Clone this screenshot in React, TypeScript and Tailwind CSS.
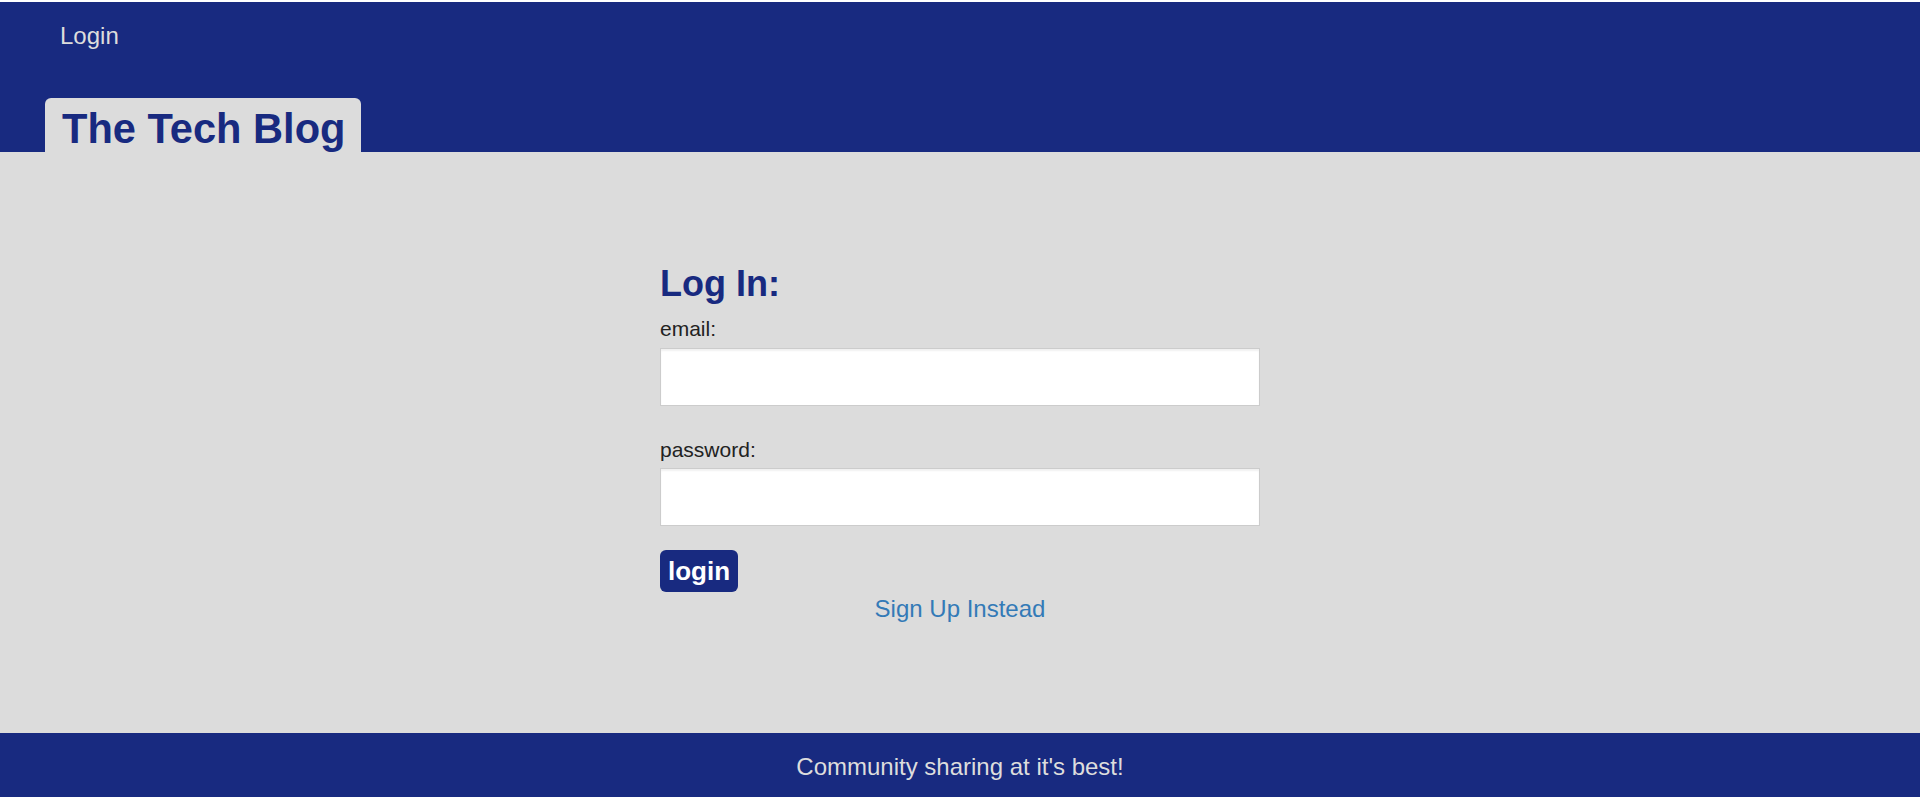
import React from "react";

const Header = () => {
  return (
    <header className="bg-[#182a80] border-t-2 border-white h-[152px] flex flex-col">
      <nav className="pl-[60px] pt-[20px]">
        <a className="text-[24px] leading-[28px] text-[#dddddd] cursor-pointer">Login</a>
      </nav>
      <div className="mt-auto ml-[45px] self-start bg-[#dcdcdc] rounded-t-[6px] pl-[17px] pr-[16px] pt-[7px] h-[54px] overflow-hidden">
        <h1 className="text-[41.6px] leading-[48px] font-bold text-[#182a80]">The Tech Blog</h1>
      </div>
    </header>
  );
};

const LoginForm = () => {
  return (
    <form className="w-[600px] mx-auto pt-[112px] flex flex-col">
      <h2 className="text-[36px] leading-[40px] font-bold text-[#182a80]">Log In:</h2>

      <label htmlFor="email" className="mt-[13px] text-[21px] leading-[24px] text-[#222222]">email:</label>
      <input
        id="email"
        type="email"
        className="mt-[7px] h-[58px] w-full bg-white border border-[#cccccc] shadow-[inset_0_2px_2px_rgba(0,0,0,0.06)] outline-none px-3"
      />

      <label htmlFor="password" className="mt-[32px] text-[21px] leading-[24px] text-[#222222]">password:</label>
      <input
        id="password"
        type="password"
        className="mt-[6px] h-[58px] w-full bg-white border border-[#cccccc] shadow-[inset_0_2px_2px_rgba(0,0,0,0.06)] outline-none px-3"
      />

      <div className="mt-[24px]">
        <button
          type="submit"
          className="h-[42px] px-[8px] bg-[#182a80] rounded-[6px] text-white text-[26px] leading-[42px] font-bold cursor-pointer"
        >
          login
        </button>
      </div>

      <a className="mt-[3px] text-center text-[24px] leading-[28px] text-[#337ab7] cursor-pointer">Sign Up Instead</a>
    </form>
  );
};

const Footer = () => {
  return (
    <footer className="bg-[#182a80] h-[64px] pt-[4px] flex items-center justify-center">
      <p className="text-[24px] leading-[28px] text-[#dddddd]">Community sharing at it's best!</p>
    </footer>
  );
};

export default function App() {
  return (
    <div className="min-h-screen flex flex-col font-['Liberation_Sans',Arial,sans-serif]">
      <Header />
      <main className="flex-1 bg-[#dcdcdc]">
        <LoginForm />
      </main>
      <Footer />
    </div>
  );
}
